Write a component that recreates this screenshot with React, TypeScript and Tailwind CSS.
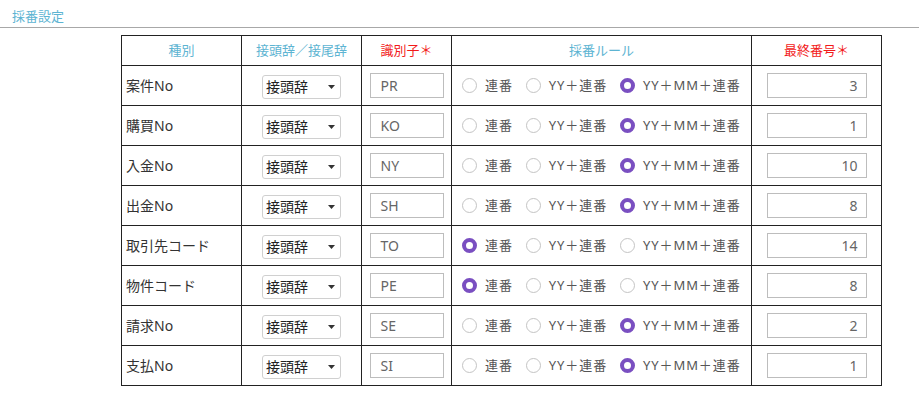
import React from 'react';

type Rule = 'seq' | 'yy' | 'yymm';

const rows: { label: string; code: string; rule: Rule; last: number }[] = [
  { label: '案件No', code: 'PR', rule: 'yymm', last: 3 },
  { label: '購買No', code: 'KO', rule: 'yymm', last: 1 },
  { label: '入金No', code: 'NY', rule: 'yymm', last: 10 },
  { label: '出金No', code: 'SH', rule: 'yymm', last: 8 },
  { label: '取引先コード', code: 'TO', rule: 'seq', last: 14 },
  { label: '物件コード', code: 'PE', rule: 'seq', last: 8 },
  { label: '請求No', code: 'SE', rule: 'yymm', last: 2 },
  { label: '支払No', code: 'SI', rule: 'yymm', last: 1 },
];

const rules: { key: Rule; text: string }[] = [
  { key: 'seq', text: '連番' },
  { key: 'yy', text: 'YY＋連番' },
  { key: 'yymm', text: 'YY＋MM＋連番' },
];

function Radio({ checked, text }: { checked: boolean; text: string }) {
  return (
    <span className="flex shrink-0 items-center gap-[8px] mr-[13px] last:mr-0">
      <span
        className={
          checked
            ? 'shrink-0 w-[15px] h-[15px] rounded-full border-[4px] border-[#7a4fc1] bg-white'
            : 'shrink-0 w-[15px] h-[15px] rounded-full border border-[#c4c4c4] bg-white'
        }
      />
      <span className="whitespace-nowrap text-[13px] tracking-[0.9px] text-[#555]">{text}</span>
    </span>
  );
}

export default function App() {
  return (
    <div className="w-[919px] h-[412px] bg-white font-['Noto_Sans','Noto_Sans_CJK_JP',sans-serif]">
      <div className="pt-[8px] pl-[12px] pb-[2px] border-b border-[#a8a8a8] text-[13px] text-[#5db4d2] leading-[17px]">
        採番設定
      </div>
      <div className="pt-[7px] pl-[121px]">
        <table className="border-collapse w-[760px] table-fixed">
          <colgroup>
            <col className="w-[120px]" />
            <col className="w-[120px]" />
            <col className="w-[90px]" />
            <col className="w-[300px]" />
            <col className="w-[130px]" />
          </colgroup>
          <thead>
            <tr className="h-[30px] text-[13px]">
              <th className="border border-[#222] font-normal text-[#5db4d2]">種別</th>
              <th className="border border-[#222] font-normal text-[#5db4d2]">接頭辞／接尾辞</th>
              <th className="border border-[#222] font-normal text-[#f21a1a]">識別子＊</th>
              <th className="border border-[#222] font-normal text-[#5db4d2]">採番ルール</th>
              <th className="border border-[#222] font-normal text-[#f21a1a]">最終番号＊</th>
            </tr>
          </thead>
          <tbody>
            {rows.map((r) => (
              <tr key={r.label} className="h-[40px]">
                <td className="border border-[#222] pl-[4px] text-[14px] text-[#333]">{r.label}</td>
                <td className="border border-[#222]">
                  <div className="mx-auto w-[79px] h-[24px] border border-[#d0d0d0] rounded-[3px] flex items-center justify-between pl-[3px] pr-[5px] mt-[2px]">
                    <span className="text-[14px] text-[#222]">接頭辞</span>
                    <svg width="7" height="4" viewBox="0 0 7 4">
                      <path d="M0 0h7L3.5 4z" fill="#333" />
                    </svg>
                  </div>
                </td>
                <td className="border border-[#222]">
                  <div className="mx-auto w-[74px] h-[25px] border border-[#bdbdbd] flex items-center pl-[10px] text-[14px] text-[#666]">
                    {r.code}
                  </div>
                </td>
                <td className="border border-[#222] pl-[10px]">
                  <div className="flex items-center">
                    {rules.map((ru) => (
                      <Radio key={ru.key} checked={r.rule === ru.key} text={ru.text} />
                    ))}
                  </div>
                </td>
                <td className="border border-[#222]">
                  <div className="mx-auto w-[100px] h-[25px] border border-[#bdbdbd] flex items-center justify-end pr-[8px] text-[14px] text-[#666]">
                    {r.last}
                  </div>
                </td>
              </tr>
            ))}
          </tbody>
        </table>
      </div>
    </div>
  );
}
